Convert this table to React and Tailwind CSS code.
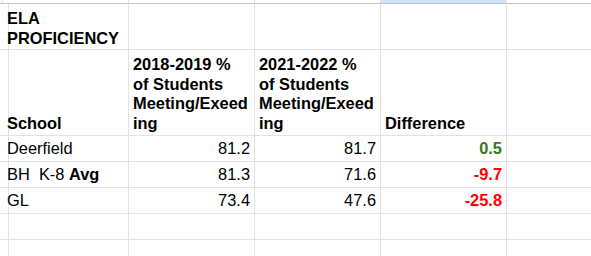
import React from 'react';

const rows = [
  { school: <span>Deerfield</span>, a: '81.2', b: '81.7', diff: '0.5', color: 'text-[#38761d]' },
  {
    school: (
      <span className="whitespace-pre">
        {'BH  K-8 '}
        <span className="font-bold">Avg</span>
      </span>
    ),
    a: '81.3',
    b: '71.6',
    diff: '-9.7',
    color: 'text-[#ff0000]',
  },
  { school: <span>GL</span>, a: '73.4', b: '47.6', diff: '-25.8', color: 'text-[#ff0000]' },
];

const Cell = ({ className = '', children }) => (
  <div className={`border-r border-b border-[#e2e2e2] px-[4px] overflow-hidden ${className}`}>{children}</div>
);

const App = () => {
  return (
    <div
      className="w-[591px] h-[256px] overflow-hidden bg-white text-black text-[16.4px] leading-[19.5px]"
      style={{ fontFamily: '"Liberation Sans", Arial, sans-serif' }}
    >
      <div className="grid grid-cols-[3px_126px_126px_126px_126px_1fr] grid-rows-[4px_46px_86px_26px_26px_26px_26px_26px]">
        {/* top sliver row */}
        <div className="border-r border-b border-r-[#e2e2e2] border-b-[#c4c4c4]" />
        <div className="border-r border-b border-r-[#e2e2e2] border-b-[#c4c4c4]" />
        <div className="border-r border-b border-r-[#e2e2e2] border-b-[#c4c4c4]" />
        <div className="border-r border-b border-r-[#e2e2e2] border-b-[#c4c4c4]" />
        <div className="border-r border-b border-r-[#e2e2e2] border-b-[#c4c4c4] bg-[#d3e3fd]" />
        <div className="border-b border-b-[#c4c4c4]" />

        {/* title row */}
        <Cell />
        <Cell className="flex flex-col justify-end pb-[1px] font-bold">
          <div>ELA</div>
          <div>PROFICIENCY</div>
        </Cell>
        <Cell />
        <Cell />
        <Cell />
        <Cell className="border-r-0" />

        {/* header row */}
        <Cell />
        <Cell className="flex flex-col justify-end pb-[2px] font-bold">
          <div>School</div>
        </Cell>
        <Cell className="flex flex-col justify-end pb-[2px] font-bold whitespace-nowrap">
          <div>2018-2019 %</div>
          <div>of Students</div>
          <div>Meeting/Exeed</div>
          <div>ing</div>
        </Cell>
        <Cell className="flex flex-col justify-end pb-[2px] font-bold whitespace-nowrap">
          <div>2021-2022 %</div>
          <div>of Students</div>
          <div>Meeting/Exeed</div>
          <div>ing</div>
        </Cell>
        <Cell className="flex flex-col justify-end pb-[2px] font-bold">
          <div>Difference</div>
        </Cell>
        <Cell className="border-r-0" />

        {rows.map((r, i) => (
          <React.Fragment key={i}>
            <Cell />
            <Cell className="flex items-center">{r.school}</Cell>
            <Cell className="flex items-center justify-end">{r.a}</Cell>
            <Cell className="flex items-center justify-end">{r.b}</Cell>
            <Cell className={`flex items-center justify-end font-bold ${r.color}`}>{r.diff}</Cell>
            <Cell className="border-r-0" />
          </React.Fragment>
        ))}

        {[0, 1].map((i) => (
          <React.Fragment key={`e${i}`}>
            <Cell />
            <Cell />
            <Cell />
            <Cell />
            <Cell />
            <Cell className="border-r-0" />
          </React.Fragment>
        ))}
      </div>
    </div>
  );
};

export default App;
